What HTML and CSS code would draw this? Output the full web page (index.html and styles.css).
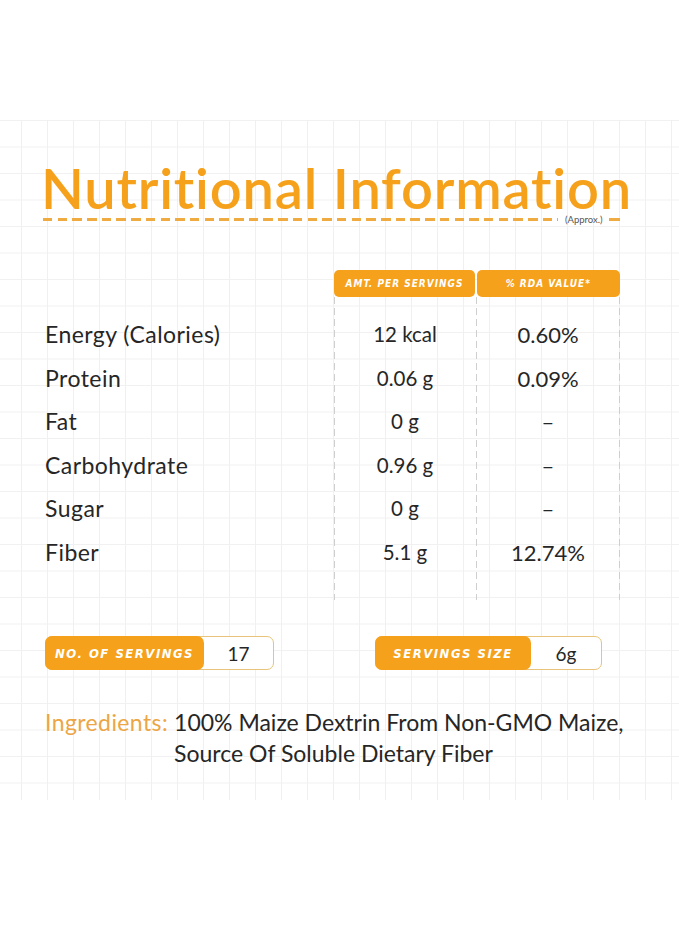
FILE: index.html
```html
<!DOCTYPE html>
<html lang="en">
<head>
<meta charset="utf-8">
<title>Nutritional Information</title>
<link rel="stylesheet" href="styles.css">
</head>
<body>
<div class="board">
  <h1 class="title">Nutritional Information</h1>
  <div class="rule"><span class="dashes"></span><span class="approx">(Approx.)</span><span class="dash-end"></span></div>

  <div class="table">
    <div class="col col-label">
      <div class="head"></div>
      <div class="cells">
        <div class="cell">Energy (Calories)</div>
        <div class="cell">Protein</div>
        <div class="cell">Fat</div>
        <div class="cell">Carbohydrate</div>
        <div class="cell">Sugar</div>
        <div class="cell">Fiber</div>
      </div>
    </div>
    <div class="col col-amt">
      <div class="head"><span class="pill">AMT. PER SERVINGS</span></div>
      <div class="cells">
        <div class="cell">12 kcal</div>
        <div class="cell">0.06 g</div>
        <div class="cell">0 g</div>
        <div class="cell">0.96 g</div>
        <div class="cell">0 g</div>
        <div class="cell">5.1 g</div>
      </div>
    </div>
    <div class="col col-rda">
      <div class="head"><span class="pill">% RDA VALUE*</span></div>
      <div class="cells">
        <div class="cell">0.60%</div>
        <div class="cell">0.09%</div>
        <div class="cell">–</div>
        <div class="cell">–</div>
        <div class="cell">–</div>
        <div class="cell">12.74%</div>
      </div>
    </div>
  </div>

  <div class="servings">
    <div class="box box-count"><span class="box-label">NO. OF SERVINGS</span><span class="box-value">17</span></div>
    <div class="box box-size"><span class="box-label">SERVINGS SIZE</span><span class="box-value">6g</span></div>
  </div>

  <p class="ingredients"><span class="ing-label">Ingredients:</span><span class="ing-text">100% Maize Dextrin From Non-GMO Maize,<br>Source Of Soluble Dietary Fiber</span></p>
</div>
</body>
</html>
```
FILE: styles.css
```css
html, body {
  margin: 0;
  padding: 0;
  background: #ffffff;
}
body {
  font-family: Lato, "Noto Sans", sans-serif;
  color: #262626;
  font-variant-ligatures: none;
}
.board {
  margin-top: 120px;
  height: 680px;
  box-sizing: border-box;
  padding-top: 45px;
  background-color: #ffffff;
  background-image:
    linear-gradient(to right, #f0f0f0 1px, transparent 1px),
    linear-gradient(to bottom, #f1f1f1 1px, transparent 1px);
  background-size: 26px 100%, 100% 26.5px;
  background-position: 21px 0, 0 0;
}
.title {
  margin: 0;
  padding-left: 41px;
  font-size: 56px;
  line-height: 46px;
  font-weight: 600;
  letter-spacing: 0.8px;
  color: #f6a11b;
}
.rule {
  display: flex;
  align-items: center;
  height: 9px;
  margin-top: 4px;
  padding-left: 43px;
}
.dashes {
  width: 515px;
  height: 2.5px;
  background: repeating-linear-gradient(to right, #efaa40 0 9.5px, transparent 9.5px 14.7px);
}
.approx {
  margin-left: 7px;
  font-size: 9.5px;
  line-height: 9px;
  color: #555555;
}
.dash-end {
  margin-left: 6px;
  width: 11px;
  height: 2.5px;
  background: #efaa40;
}
.table {
  display: flex;
  padding-left: 45px;
  margin-top: 46px;
}
.col-label { width: 289px; }
.col-amt { width: 142px; }
.col-rda { width: 144px; }
.head { height: 27px; }
.pill {
  display: block;
  height: 27px;
  line-height: 28px;
  background: #f6a11b;
  color: #ffffff;
  border-radius: 5px;
  text-align: center;
  font-family: "DejaVu Sans Condensed", "DejaVu Sans", sans-serif;
  font-style: italic;
  font-weight: bold;
  font-size: 10px;
  letter-spacing: 1px;
}
.col-amt .pill { margin-right: 1px; }
.col-rda .pill { margin-left: 1px; width: 142.5px; }
.cells {
  padding: 16px 0 26px;
}
.col-rda .cells {
  background-image:
    repeating-linear-gradient(to bottom, #cfcfcf 0 7px, transparent 7px 11px),
    repeating-linear-gradient(to bottom, #cfcfcf 0 7px, transparent 7px 11px);
  background-size: 1px 100%, 1px 100%;
  background-repeat: no-repeat;
  background-position: left top, right top;
}
.col-amt .cells {
  background-image: repeating-linear-gradient(to bottom, #cfcfcf 0 7px, transparent 7px 11px);
  background-size: 1px 100%;
  background-repeat: no-repeat;
  background-position: left top;
}
.cell {
  height: 43.5px;
  line-height: 43.5px;
  font-size: 22px;
}
.col-label .cell {
  font-size: 23px;
  letter-spacing: 0.45px;
}
.col-amt .cell {
  font-size: 20.5px;
  text-align: center;
}
.col-rda .cell {
  text-align: center;
}
.servings {
  display: flex;
  gap: 101px;
  padding-left: 45px;
  margin-top: 36px;
}
.box {
  display: flex;
  height: 34px;
  box-sizing: border-box;
  border: 1px solid #e8c47a;
  border-radius: 7px;
  background: #ffffff;
}
.box-count { width: 229px; }
.box-size { width: 227px; }
.box-label {
  margin: -1px 0 -1px -1px;
  background: #f6a11b;
  border-radius: 7px;
  color: #ffffff;
  display: flex;
  align-items: center;
  justify-content: center;
  font-family: "DejaVu Sans Condensed", "DejaVu Sans", sans-serif;
  font-style: italic;
  font-weight: bold;
  font-size: 13px;
  letter-spacing: 1.5px;
}
.box-count .box-label { width: 159px; }
.box-size .box-label { width: 156px; }
.box-value {
  flex: 1;
  display: flex;
  align-items: center;
  justify-content: center;
  font-size: 19px;
}
.ingredients {
  margin: 37px 0 0;
  padding-left: 45px;
  display: flex;
  gap: 6px;
  font-size: 23px;
  line-height: 31px;
}
.ing-label {
  color: #eca645;
  letter-spacing: 0.4px;
}
```
